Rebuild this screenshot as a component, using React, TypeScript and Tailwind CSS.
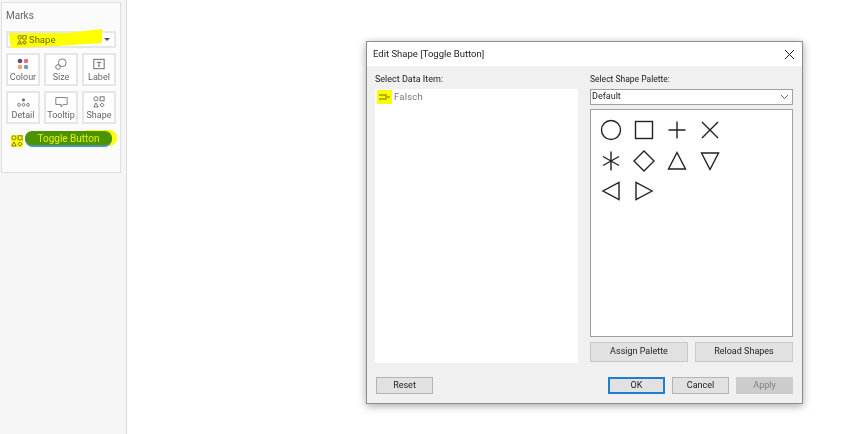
const FONT = "font-['Roboto',sans-serif]"

function MarkIcon({ name }: { name: string }) {
  if (name === 'Colour') {
    return (
      <svg width="12" height="12" viewBox="0 0 14 14">
        <circle cx="3.5" cy="3.5" r="2.7" fill="#5d4a85" />
        <circle cx="10.5" cy="3.5" r="2.7" fill="#e8707a" />
        <circle cx="3.5" cy="10.5" r="2.7" fill="#f0a070" />
        <circle cx="10.5" cy="10.5" r="2.7" fill="#6d9fc9" />
      </svg>
    )
  }
  if (name === 'Size') {
    return (
      <svg width="12" height="12" viewBox="0 0 14 14" fill="none" stroke="#666" strokeWidth="1">
        <circle cx="8.5" cy="5.5" r="4.5" fill="#fff" />
        <circle cx="3.5" cy="10.5" r="2.7" fill="#fff" />
      </svg>
    )
  }
  if (name === 'Label') {
    return (
      <svg width="12" height="12" viewBox="0 0 14 14" fill="none" stroke="#555" strokeWidth="1">
        <rect x="1" y="1.5" width="12" height="11" />
        <path d="M4.5 5h5M7 5v4.5M6 9.5h2" />
      </svg>
    )
  }
  if (name === 'Detail') {
    return (
      <svg width="13" height="12" viewBox="0 0 16 14" fill="none" stroke="#666" strokeWidth="1">
        <circle cx="8" cy="4.5" r="1.8" fill="#666" stroke="none" />
        <circle cx="2.5" cy="10.5" r="1.7" />
        <circle cx="8" cy="10.5" r="1.7" />
        <circle cx="13.5" cy="10.5" r="1.7" />
      </svg>
    )
  }
  if (name === 'Tooltip') {
    return (
      <svg width="13" height="12" viewBox="0 0 16 14" fill="none" stroke="#666" strokeWidth="1">
        <path d="M1 1.5h14v8.5h-5l-2.5 3v-3H1z" />
      </svg>
    )
  }
  return <ShapesIcon stroke="#666" />
}

function ShapesIcon({ stroke }: { stroke: string }) {
  return (
    <svg width="12" height="12" viewBox="0 0 14 15" fill="none" stroke={stroke} strokeWidth="1.1">
      <circle cx="3.2" cy="3.5" r="2.6" />
      <rect x="8.4" y="1" width="5" height="5" />
      <path d="M3.2 8.7l2.8 5H.4z" />
      <path d="M10.9 8.7l2.6 2.6-2.6 2.6-2.6-2.6z" />
    </svg>
  )
}

function MarkCard({ name }: { name: string }) {
  return (
    <div className="flex h-[33px] w-[34px] flex-col items-center justify-between border-2 border-[#e6e6e6] bg-white pt-[3px]">
      <MarkIcon name={name} />
      <span className="text-[9px] leading-[13px] whitespace-nowrap text-[#666]">{name}</span>
    </div>
  )
}

function Sidebar() {
  return (
    <aside className="h-full w-[127px] shrink-0 border-r border-[#dcdcdc] bg-[#f5f5f5] pt-[2px] pr-[5px] pl-[1px]">
      <div className="h-[171px] border border-[#dedede] bg-[#fbfbfb] px-[3px] pl-[4px]">
        <p className="pt-[6px] text-[10px] leading-[14px] text-[#666]">Marks</p>
        <div className="relative mt-[8px] flex h-[17px] w-[110px] items-center border-2 border-[#e6e6e6] bg-white">
          <svg className="absolute -top-[4px] -left-[1px]" width="96" height="20" viewBox="0 0 96 20">
            <path d="M2 4 L60 4 L95 0 L95 14 L50 17 L4 19 Z" fill="#ffff00" />
          </svg>
          <div className="relative flex items-center gap-[2px] pl-[9px]">
            <svg width="10" height="10" viewBox="0 0 14 15" fill="none" stroke="#8a8a20" strokeWidth="1.6">
              <circle cx="3.5" cy="3.5" r="2.6" />
              <rect x="8.2" y="1" width="5" height="5" />
              <path d="M3.5 8.5l2.8 5H.7z" />
              <path d="M10.7 8.5l2.7 2.7-2.7 2.7-2.7-2.7z" />
            </svg>
            <span className="text-[9.5px] leading-[13px] text-[#5f6a10]">Shape</span>
          </div>
          <div className="absolute top-[5px] right-[4px] h-0 w-0 border-x-[3px] border-t-[3px] border-x-transparent border-t-[#555]" />
        </div>
        <div className="mt-[5px] grid w-[110px] grid-cols-[34px_34px_34px] gap-x-[4px] gap-y-[5px]">
          {['Colour', 'Size', 'Label', 'Detail', 'Tooltip', 'Shape'].map((name) => (
            <MarkCard key={name} name={name} />
          ))}
        </div>
        <div className="relative mt-[6px] flex h-[18px] items-center pl-[5px]">
          <div className="mt-[3px] mr-[2px] bg-[#ffff00]">
            <ShapesIcon stroke="#6b6b10" />
          </div>
          <div className="relative h-[18px] w-[92px]">
            <div className="absolute top-0 right-0 left-[60px] h-[16px] rounded-r-full bg-[#ffff00]" />
            <div className="absolute top-[2px] left-0 h-[15px] w-[87px] rounded-full bg-[#4f93b4]" />
            <div className="absolute top-[1px] left-0 flex h-[14px] w-[87px] items-center justify-center rounded-full bg-[#4b9400] text-[10px] text-[#e6f000]">
              Toggle Button
            </div>
          </div>
        </div>
      </div>
    </aside>
  )
}

function PaletteShape({ index }: { index: number }) {
  const shapes = [
    <circle key="0" cx="12" cy="12" r="9.5" />,
    <rect key="1" x="3.5" y="3.5" width="17" height="17" />,
    <path key="2" d="M12 3.5v17M3.5 12h17" />,
    <path key="3" d="M4 4l16 16M20 4L4 20" />,
    <path key="4" d="M12 2.5v19M4 7.5l16 9M20 7.5l-16 9" />,
    <path key="5" d="M12 2l10 10-10 10L2 12z" />,
    <path key="6" d="M12 3.5L20.5 20h-17z" />,
    <path key="7" d="M3.5 4h17L12 20.5z" />,
    <path key="8" d="M20 3.5v17L4 12z" />,
    <path key="9" d="M4 3.5v17L20 12z" />,
  ]
  return (
    <div className="flex h-[30.5px] w-[33px] items-center justify-center">
      <svg width="24" height="24" viewBox="0 0 24 24" fill="none" stroke="#222" strokeWidth="1.4">
        {shapes[index]}
      </svg>
    </div>
  )
}

function DialogButton({ label, className }: { label: string; className: string }) {
  return (
    <button className={`flex items-center justify-center border text-[9px] ${className}`}>{label}</button>
  )
}

function ShapeDialog() {
  return (
    <div className="absolute top-[41px] left-[366px] flex h-[363px] w-[437px] flex-col border border-[#8c8c8c] bg-[#f0f0f0] shadow-[0_2px_8px_rgba(0,0,0,0.35)]">
      <div className="flex h-[24px] shrink-0 items-center justify-between bg-white pr-[7px] pl-[6px]">
        <span className="text-[9.5px] text-[#222]">Edit Shape [Toggle Button]</span>
        <svg width="11" height="11" viewBox="0 0 11 11" stroke="#222" strokeWidth="1">
          <path d="M1 1l9 9M10 1l-9 9" />
        </svg>
      </div>
      <div className="flex h-[297px] gap-[12px] pt-[7px] pl-[8px]">
        <div className="flex w-[203px] flex-col">
          <p className="h-[16px] text-[9px] leading-[13px] text-[#222]">Select Data Item:</p>
          <div className="h-[274px] bg-white">
            <div className="flex items-center gap-[2px] pt-[1px] pl-[2px]">
              <div className="flex h-[14px] w-[15px] items-center justify-center bg-[#ffff00]">
                <svg width="12" height="6" viewBox="0 0 12 6" fill="none" stroke="#6b6b10" strokeWidth="1">
                  <path d="M0 1h8M0 5h8M6 3h5" />
                </svg>
              </div>
              <span className="text-[9.5px] tracking-[0.2px] text-[#777]">Falsch</span>
            </div>
          </div>
        </div>
        <div className="flex w-[203px] flex-col">
          <p className="h-[16px] text-[8.5px] leading-[13px] text-[#222]">Select Shape Palette:</p>
          <div className="flex h-[16px] items-center justify-between border border-[#a0a0a0] bg-white pr-[3px] pl-[1px]">
            <span className="text-[9px] text-[#222]">Default</span>
            <svg width="9" height="6" viewBox="0 0 9 6" fill="none" stroke="#666" strokeWidth="1">
              <path d="M1 1l3.5 3.5L8 1" />
            </svg>
          </div>
          <div className="mt-[4px] h-[228px] border border-[#a0a0a0] bg-white pt-[5px] pl-[3px]">
            <div className="grid grid-cols-[33px_33px_33px_33px]">
              {[0, 1, 2, 3, 4, 5, 6, 7, 8, 9].map((i) => (
                <PaletteShape key={i} index={i} />
              ))}
            </div>
          </div>
          <div className="mt-[5px] flex justify-between">
            <DialogButton label="Assign Palette" className="h-[20px] w-[98px] border-[#c8c8c8] bg-[#e1e1e1] text-[#222]" />
            <DialogButton label="Reload Shapes" className="h-[20px] w-[98px] border-[#c8c8c8] bg-[#e1e1e1] text-[#222]" />
          </div>
        </div>
      </div>
      <div className="mt-[14px] flex justify-between px-[9px]">
        <DialogButton label="Reset" className="h-[17px] w-[57px] border-[#b4b4b4] bg-[#e1e1e1] text-[#222]" />
        <div className="flex gap-[7px]">
          <DialogButton label="OK" className="h-[17px] w-[57px] border-2 border-[#1e7fd0] bg-[#e1e1e1] text-[#222]" />
          <DialogButton label="Cancel" className="h-[17px] w-[57px] border-[#b4b4b4] bg-[#e1e1e1] text-[#222]" />
          <DialogButton label="Apply" className="h-[17px] w-[57px] border-[#cccccc] bg-[#cccccc] text-[#808080]" />
        </div>
      </div>
    </div>
  )
}

export default function App() {
  return (
    <div className={`relative flex h-[434px] w-[843px] overflow-hidden bg-white blur-[0.3px] ${FONT}`}>
      <Sidebar />
      <ShapeDialog />
    </div>
  )
}
